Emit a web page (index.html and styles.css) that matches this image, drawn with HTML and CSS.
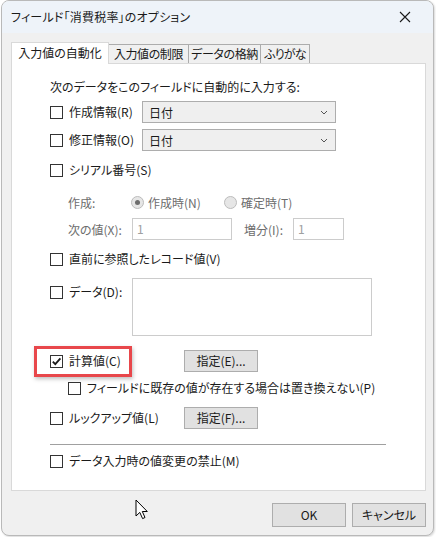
FILE: index.html
```html
<!DOCTYPE html>
<html lang="ja">
<head>
<meta charset="utf-8">
<link rel="stylesheet" href="styles.css">
</head>
<body>
<div class="window">
  <div class="titlebar">
    <span class="title">フィールド「消費税率」のオプション</span>
    <svg class="close" width="12" height="12" viewBox="0 0 12 12"><path d="M1 1L11 11M11 1L1 11" stroke="#1a1a1a" stroke-width="1.1" fill="none"/></svg>
  </div>
  <div class="content">
    <div class="tabs">
      <div class="tab active t1">入力値の自動化</div>
      <div class="tab t2">入力値の制限</div>
      <div class="tab t3">データの格納</div>
      <div class="tab t4">ふりがな</div>
    </div>
    <div class="panel">
      <div class="intro">次のデータをこのフィールドに自動的に入力する:</div>
      <div class="row r1">
        <span class="cb"></span><span class="lbl w-select">作成情報(R)</span>
        <div class="select"><span>日付</span><svg width="8" height="5" viewBox="0 0 8 5"><path d="M1 1L4 4L7 1" stroke="#555" fill="none"/></svg></div>
      </div>
      <div class="row r2">
        <span class="cb"></span><span class="lbl w-select">修正情報(O)</span>
        <div class="select"><span>日付</span><svg width="8" height="5" viewBox="0 0 8 5"><path d="M1 1L4 4L7 1" stroke="#555" fill="none"/></svg></div>
      </div>
      <div class="row r3">
        <span class="cb"></span><span class="lbl">シリアル番号(S)</span>
      </div>
      <div class="row r4 sub disabled">
        <span class="sublbl">作成:</span>
        <span class="radio on"></span><span class="rlbl">作成時(N)</span>
        <span class="radio"></span><span class="rlbl">確定時(T)</span>
      </div>
      <div class="row r5 sub disabled">
        <span class="sublbl2">次の値(X):</span>
        <span class="input wide">1</span>
        <span class="inclbl">増分(I):</span>
        <span class="input narrow">1</span>
      </div>
      <div class="row r6">
        <span class="cb"></span><span class="lbl">直前に参照したレコード値(V)</span>
      </div>
      <div class="row r7">
        <div class="datalbl"><span class="cb"></span><span class="lbl">データ(D):</span></div>
        <div class="textarea"></div>
      </div>
      <div class="row r8">
        <span class="cb checked"><svg width="11" height="11" viewBox="0 0 11 11"><path d="M1.8 5.6L4.3 8.2L9.4 2.4" stroke="#1a1a1a" stroke-width="1.8" fill="none"/></svg></span><span class="lbl w-btn">計算値(C)</span>
        <span class="btn">指定(E)...</span>
        <div class="highlight"></div>
      </div>
      <div class="row r9">
        <span class="cb"></span><span class="lbl">フィールドに既存の値が存在する場合は置き換えない(P)</span>
      </div>
      <div class="row r10">
        <span class="cb"></span><span class="lbl w-btn">ルックアップ値(L)</span>
        <span class="btn">指定(F)...</span>
      </div>
      <div class="rule"></div>
      <div class="row r11">
        <span class="cb"></span><span class="lbl">データ入力時の値変更の禁止(M)</span>
      </div>
    </div>
    <div class="footer">
      <span class="btn fbtn">OK</span>
      <span class="btn fbtn">キャンセル</span>
    </div>
    <svg class="cursor" width="14" height="22" viewBox="0 0 14 22"><path d="M1 1V17L4.8 13.4L7.6 19.6L10 18.5L7.3 12.5H12.3Z" fill="#fff" stroke="#000" stroke-width="1" stroke-linejoin="round"/></svg>
  </div>
</div>
</body>
</html>
```

FILE: styles.css
```css
* { box-sizing: border-box; }
html, body { margin: 0; padding: 0; }
body {
  background: #ffffff;
  font-family: "Noto Sans CJK JP", "Noto Sans", sans-serif;
  font-size: 12px;
  font-feature-settings: "palt";
  color: #1a1a1a;
  width: 436px;
  height: 537px;
  overflow: hidden;
}
.window {
  position: relative;
  margin-left: 1px;
  width: 433px;
  height: 536px;
  border: 1px solid #b9b9b9;
  border-radius: 8px;
  background: #f0f0f0;
  overflow: hidden;
  box-shadow: 1px 1px 2px rgba(0,0,0,0.15);
}
.titlebar {
  height: 32px;
  background: #eef3f9;
  display: flex;
  align-items: center;
  justify-content: space-between;
  padding: 0 22px 0 9px;
}
.title { font-size: 12px; line-height: 16px; letter-spacing: 0.2px; }
.close { display: block; }
.content {
  position: relative;
  padding: 9px 7px 0 9px;
}
.tabs {
  display: flex;
  align-items: flex-end;
  height: 21px;
  position: relative;
  z-index: 2;
}
.tab {
  height: 19px;
  line-height: 17px;
  border: 1px solid #acacac;
  border-bottom: none;
  background: #f0f0f0;
  margin-left: -1px;
  text-align: center;
  white-space: nowrap;
  letter-spacing: -0.4px;
}
.t1 { width: 98px; letter-spacing: 0; }
.t2 { width: 81px; }
.t3 { width: 73px; }
.t4 { width: 50px; letter-spacing: -0.8px; }
.tab.active {
  height: 22px;
  line-height: 20px;
  background: #ffffff;
  border-color: #d9d9d9;
  margin-left: 0;
  margin-bottom: -1px;
  z-index: 3;
}
.panel {
  background: #ffffff;
  border: 1px solid #d9d9d9;
  height: 428px;
  padding: 15px 0 0 38px;
  display: flex;
  flex-direction: column;
  position: relative;
}
.intro { line-height: 16px; }
.row {
  display: flex;
  align-items: center;
  position: relative;
}
.r1 { height: 22px; margin-top: 6px; }
.r2 { height: 22px; margin-top: 6px; }
.r3 { height: 16px; margin-top: 11px; }
.r4 { height: 22px; margin-top: 13px; }
.r5 { height: 22px; margin-top: 5px; }
.r6 { height: 16px; margin-top: 11px; }
.r7 { height: 58px; margin-top: 11px; align-items: flex-start; }
.r8 { height: 22px; margin-top: 14px; }
.r9 { height: 16px; margin-top: 8px; padding-left: 18px; }
.r10 { height: 22px; margin-top: 11px; }
.r11 { height: 16px; margin-top: 8px; }
.cb {
  width: 13px;
  height: 13px;
  border: 1px solid #333333;
  background: #fff;
  flex: none;
  display: flex;
  align-items: center;
  justify-content: center;
}
.lbl { margin-left: 6px; line-height: 16px; white-space: nowrap; }
.w-select { width: 73px; }
.w-btn { width: 115px; }
.select {
  width: 194px;
  height: 22px;
  border: 1px solid #adadad;
  background: #efefef;
  display: flex;
  align-items: center;
  justify-content: space-between;
  padding: 0 7px 0 6px;
}
.sub { padding-left: 18px; }
.disabled { color: #6d6d6d; }
.sublbl { width: 63px; }
.radio {
  width: 13px;
  height: 13px;
  border-radius: 50%;
  border: 1px solid #bcbcbc;
  background: #e6e6e6;
  flex: none;
  display: flex;
  align-items: center;
  justify-content: center;
}
.radio.on::after {
  content: "";
  width: 5px;
  height: 5px;
  border-radius: 50%;
  background: #6d6d6d;
}
.rlbl { margin-left: 4px; width: 76px; }
.sublbl2 { width: 64px; }
.input {
  height: 22px;
  border: 1px solid #cccccc;
  background: #fff;
  color: #a0a0a0;
  padding-left: 4px;
  line-height: 20px;
}
.input.wide { width: 100px; }
.input.narrow { width: 51px; }
.inclbl { margin-left: 12px; width: 49px; }
.datalbl { display: flex; align-items: center; width: 82px; margin-top: 6px; }
.textarea {
  width: 240px;
  height: 58px;
  border: 1px solid #cccccc;
  background: #fff;
}
.btn {
  height: 22px;
  width: 74px;
  border: 1px solid #adadad;
  background: #e1e1e1;
  display: flex;
  align-items: center;
  justify-content: center;
  line-height: 16px;
}
.highlight {
  position: absolute;
  left: -16px;
  top: -4px;
  width: 98px;
  height: 31px;
  border: 3px solid #e8474b;
  box-shadow: 1px 2px 4px rgba(0,0,0,0.25);
}
.rule {
  margin-top: 15px;
  width: 336px;
  height: 1px;
  background: #a0a0a0;
}
.footer {
  display: flex;
  justify-content: flex-end;
  gap: 6px;
  margin-top: 12px;
}
.fbtn { width: 74px; height: 24px; }
.cursor {
  position: absolute;
  left: 133px;
  top: 466px;
}
```
